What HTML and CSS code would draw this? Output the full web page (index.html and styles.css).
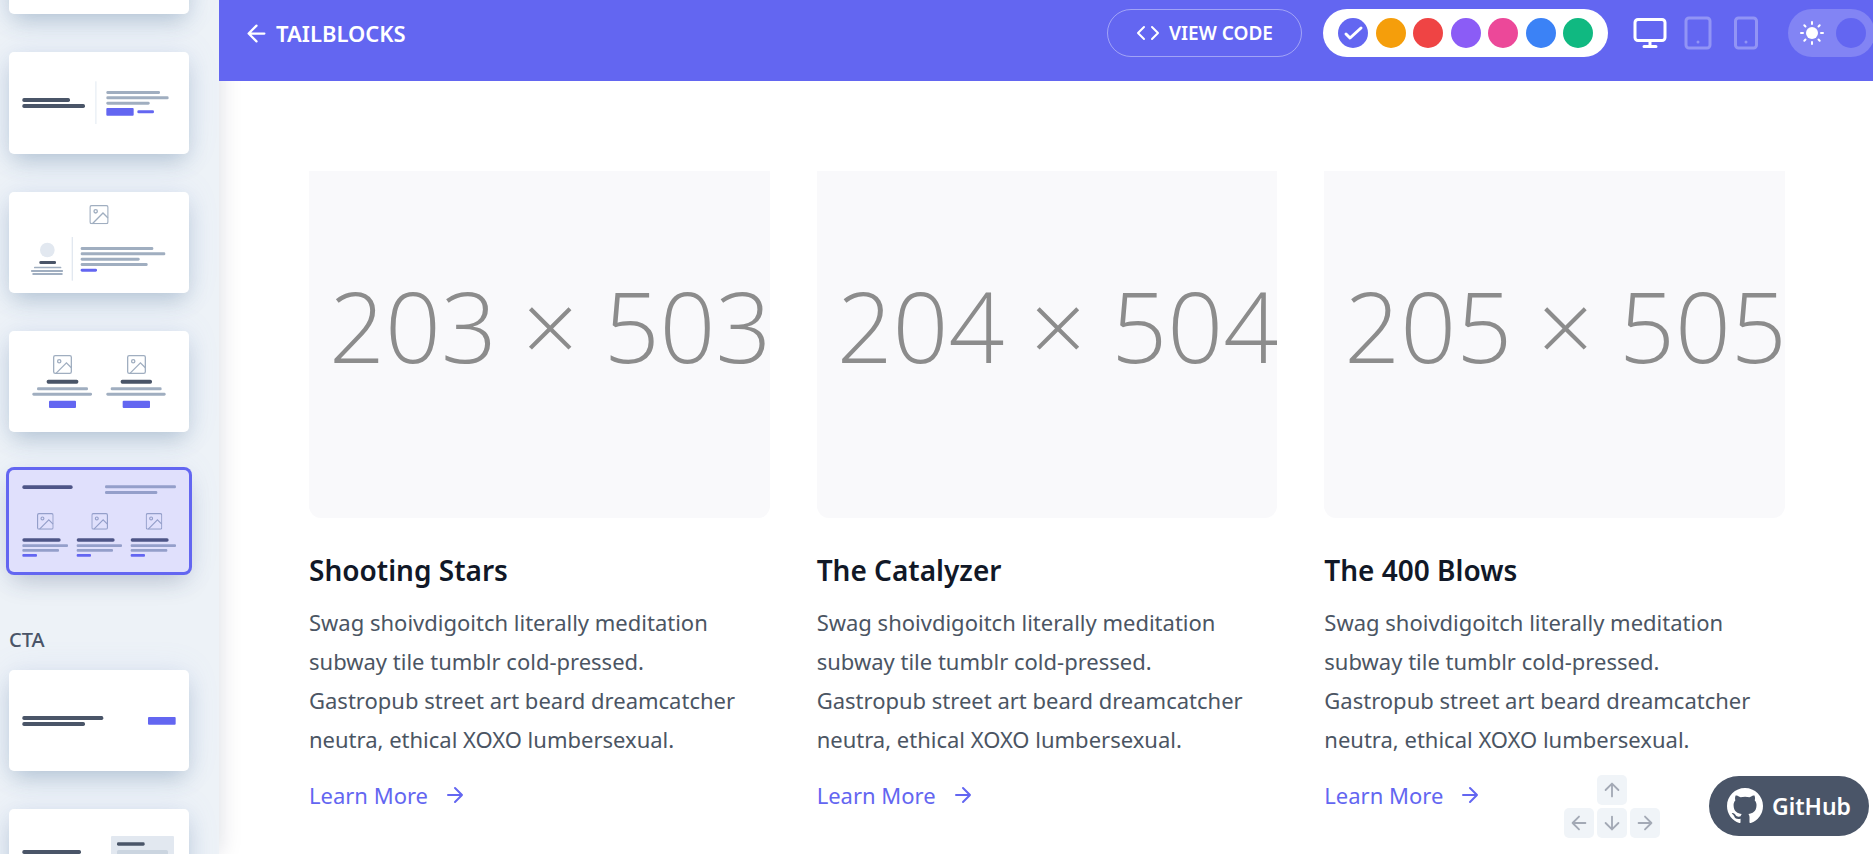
FILE: index.html
```
<!DOCTYPE html>
<html lang="en">
<head>
<meta charset="utf-8">
<meta name="viewport" content="width=device-width, initial-scale=1">
<title>Tailblocks</title>
<link rel="stylesheet" href="styles.css">
</head>
<body>
<svg width="0" height="0" class="sprite" aria-hidden="true">
  <symbol id="picture" viewBox="0 0 58 58">
    <rect x="2" y="2" width="54" height="54" rx="5"/>
    <circle cx="19" cy="19" r="5"/>
    <path d="M9 56 41 24 56 39"/>
  </symbol>
  <symbol id="arrow" viewBox="0 0 24 24"><path d="M5 12h14M12 5l7 7-7 7"/></symbol>
</svg>
<div class="app">
  <aside class="sidebar">
    <div class="block-list">
      <button class="block" aria-label="Content block 1"><svg viewBox="0 0 540 304"></svg></button>
      <button class="block" aria-label="Content block 2">
        <svg viewBox="0 0 540 304">
          <g class="dark"><rect x="40" y="138" width="143" height="12" rx="5"/><rect x="40" y="156" width="188" height="12" rx="5"/></g>
          <rect class="pale" x="258" y="88" width="5" height="128"/>
          <g class="grey"><rect x="292" y="117" width="161" height="9" rx="4"/><rect x="292" y="133" width="187" height="9" rx="4"/><rect x="292" y="149" width="130" height="9" rx="4"/></g>
          <g class="brand"><rect x="292" y="168" width="82" height="23" rx="3"/><rect x="385" y="175" width="50" height="9" rx="4"/></g>
        </svg>
      </button>
      <button class="block" aria-label="Content block 3">
        <svg viewBox="0 0 540 304">
          <use class="line" href="#picture" x="241" y="39" width="58" height="58"/>
          <circle class="light" cx="115" cy="174" r="22"/>
          <rect class="dark" x="91" y="207" width="50" height="9" rx="4"/>
          <g class="grey"><rect x="75" y="224" width="82" height="5" rx="2"/><rect x="66" y="234" width="96" height="6" rx="2"/><rect x="70" y="243" width="91" height="6" rx="2"/></g>
          <rect class="light" x="188" y="135" width="4" height="131"/>
          <g class="grey"><rect x="215" y="165" width="218" height="9" rx="4"/><rect x="215" y="181" width="254" height="9" rx="4"/><rect x="215" y="197" width="177" height="9" rx="4"/><rect x="215" y="213" width="201" height="9" rx="4"/></g>
          <rect class="brand" x="215" y="230" width="49" height="9" rx="4"/>
        </svg>
      </button>
      <button class="block" aria-label="Content block 4">
        <svg viewBox="0 0 540 304">
          <use class="line" href="#picture" x="132" y="72" width="57" height="57"/>
          <use class="line" href="#picture" x="354" y="72" width="57" height="57"/>
          <g class="dark"><rect x="113" y="146" width="95" height="12" rx="5"/><rect x="335" y="146" width="94" height="12" rx="5"/></g>
          <g class="grey"><rect x="84" y="169" width="153" height="9" rx="4"/><rect x="305" y="169" width="153" height="9" rx="4"/><rect x="70" y="185" width="179" height="9" rx="4"/><rect x="292" y="185" width="178" height="9" rx="4"/></g>
          <g class="brand"><rect x="120" y="209" width="81" height="22" rx="3"/><rect x="341" y="209" width="82" height="22" rx="3"/></g>
        </svg>
      </button>
      <button class="block selected" aria-label="Content block 5" aria-pressed="true">
        <svg viewBox="0 0 540 304">
          <rect class="dark" x="40" y="46" width="151" height="11" rx="5"/>
          <g class="grey"><rect x="288" y="46" width="213" height="9" rx="4"/><rect x="288" y="63" width="157" height="9" rx="4"/></g>
          <use class="line" href="#picture" x="84" y="129" width="50" height="50"/>
          <use class="line" href="#picture" x="247" y="129" width="50" height="50"/>
          <use class="line" href="#picture" x="410" y="129" width="50" height="50"/>
          <g class="dark"><rect x="40" y="205" width="115" height="10" rx="5"/><rect x="203" y="205" width="114" height="10" rx="5"/><rect x="365" y="205" width="114" height="10" rx="5"/></g>
          <g class="grey"><rect x="40" y="223" width="137" height="8" rx="3"/><rect x="203" y="223" width="136" height="8" rx="3"/><rect x="365" y="223" width="136" height="8" rx="3"/><rect x="40" y="237" width="110" height="8" rx="3"/><rect x="203" y="237" width="109" height="8" rx="3"/><rect x="365" y="237" width="110" height="8" rx="3"/></g>
          <g class="brand"><rect x="40" y="252" width="44" height="8" rx="3"/><rect x="203" y="252" width="43" height="8" rx="3"/><rect x="365" y="252" width="43" height="8" rx="3"/></g>
        </svg>
      </button>
    </div>
    <h2 class="group-title">CTA</h2>
    <div class="block-list">
      <button class="block" aria-label="CTA block 1">
        <svg viewBox="0 0 540 304">
          <g class="dark"><rect x="40" y="138" width="243" height="12" rx="5"/><rect x="40" y="156" width="188" height="12" rx="5"/></g>
          <rect class="brand" x="417" y="141" width="83" height="23" rx="3"/>
        </svg>
      </button>
      <button class="block" aria-label="CTA block 2">
        <svg viewBox="0 0 540 304">
          <rect class="light" x="306" y="81" width="189" height="150" rx="3"/>
          <rect class="field" x="324" y="123" width="153" height="24" rx="5"/>
          <g class="dark"><rect x="324" y="100" width="83" height="10" rx="4"/><rect x="40" y="123" width="176" height="12" rx="5"/><rect x="40" y="141" width="130" height="12" rx="5"/></g>
        </svg>
      </button>
    </div>
  </aside>

  <div class="page">
    <header class="toolbar">
      <button class="opener"><svg class="icon flip" viewBox="0 0 24 24"><use href="#arrow"/></svg>TAILBLOCKS</button>
      <button class="view-code"><svg class="icon" viewBox="0 0 24 24"><path d="M16 18l6-6-6-6M8 6l-6 6 6 6"/></svg>VIEW CODE</button>
      <div class="palette">
        <button class="dot indigo" aria-label="Indigo"><svg class="icon" viewBox="0 0 24 24"><path d="M20 7 9 17l-4-4"/></svg></button>
        <button class="dot yellow" aria-label="Yellow"></button>
        <button class="dot red" aria-label="Red"></button>
        <button class="dot purple" aria-label="Purple"></button>
        <button class="dot pink" aria-label="Pink"></button>
        <button class="dot blue" aria-label="Blue"></button>
        <button class="dot green" aria-label="Green"></button>
      </div>
      <div class="devices">
        <button class="device current" aria-label="Desktop"><svg class="icon" viewBox="0 0 24 24"><rect x="2" y="3" width="20" height="14" rx="2"/><path d="M8 21h8M12 17v4"/></svg></button>
        <button class="device" aria-label="Tablet"><svg class="icon" viewBox="0 0 24 24"><rect x="4" y="2" width="16" height="20" rx="2"/><path d="M12 18h.01"/></svg></button>
        <button class="device" aria-label="Phone"><svg class="icon" viewBox="0 0 24 24"><rect x="5" y="2" width="14" height="20" rx="2"/><path d="M12 18h.01"/></svg></button>
      </div>
      <button class="mode" aria-label="Toggle dark mode">
        <svg class="icon" viewBox="0 0 24 24"><circle class="sun" cx="12" cy="12" r="6"/><path d="M12 1v2M12 21v2M1 12h2M21 12h2M4.300 4.300l1.200 1.200M18.500 18.500l1.200 1.200M4.300 19.700l1.200-1.200M18.500 5.500l1.200-1.200"/></svg>
        <span class="knob"></span>
      </button>
    </header>

    <main class="preview">
      <article class="card">
        <div class="thumb" role="img">203 × 503</div>
        <h2 class="title">Shooting Stars</h2>
        <p class="copy">Swag shoivdigoitch literally meditation subway tile tumblr cold-pressed. Gastropub street art beard dreamcatcher neutra, ethical XOXO lumbersexual.</p>
        <a class="more" href="#">Learn More<svg class="icon" viewBox="0 0 24 24"><use href="#arrow"/></svg></a>
      </article>
      <article class="card">
        <div class="thumb" role="img">204 × 504</div>
        <h2 class="title">The Catalyzer</h2>
        <p class="copy">Swag shoivdigoitch literally meditation subway tile tumblr cold-pressed. Gastropub street art beard dreamcatcher neutra, ethical XOXO lumbersexual.</p>
        <a class="more" href="#">Learn More<svg class="icon" viewBox="0 0 24 24"><use href="#arrow"/></svg></a>
      </article>
      <article class="card">
        <div class="thumb" role="img">205 × 505</div>
        <h2 class="title">The 400 Blows</h2>
        <p class="copy">Swag shoivdigoitch literally meditation subway tile tumblr cold-pressed. Gastropub street art beard dreamcatcher neutra, ethical XOXO lumbersexual.</p>
        <a class="more" href="#">Learn More<svg class="icon" viewBox="0 0 24 24"><use href="#arrow"/></svg></a>
      </article>
    </main>
  </div>
</div>

<div class="floating">
  <div class="keys">
    <span class="key up"><svg class="icon" viewBox="0 0 24 24"><path d="M12 19V5M5 12l7-7 7 7"/></svg></span>
    <span class="key"><svg class="icon flip" viewBox="0 0 24 24"><use href="#arrow"/></svg></span>
    <span class="key"><svg class="icon" viewBox="0 0 24 24"><path d="M12 5v14M5 12l7 7 7-7"/></svg></span>
    <span class="key"><svg class="icon" viewBox="0 0 24 24"><use href="#arrow"/></svg></span>
  </div>
  <a class="github" href="#"><svg viewBox="0 0 16 16"><path d="M8 0C3.580 0 0 3.580 0 8c0 3.540 2.290 6.530 5.470 7.590.4.070.55-.17.55-.38 0-.19-.01-.82-.01-1.490-2.010.37-2.530-.49-2.690-.94-.09-.23-.48-.94-.82-1.130-.28-.15-.68-.52-.01-.53.63-.01 1.080.58 1.230.82.72 1.210 1.870.87 2.330.66.07-.52.28-.87.51-1.070-1.780-.2-3.640-.89-3.640-3.950 0-.87.31-1.590.82-2.150-.08-.2-.36-1.020.08-2.120 0 0 .67-.21 2.200.82.64-.18 1.320-.27 2-.27.68 0 1.360.09 2 .27 1.530-1.040 2.200-.82 2.200-.82.44 1.100.16 1.920.08 2.120.51.56.82 1.270.82 2.150 0 3.070-1.870 3.750-3.650 3.950.29.25.54.73.54 1.480 0 1.070-.01 1.930-.01 2.200 0 .21.15.46.55.38A8.010 8.010 0 0 0 16 8c0-4.420-3.580-8-8-8z"/></svg>GitHub</a>
</div>
</body>
</html>
```
FILE: styles.css
```
* { box-sizing: border-box; margin: 0; padding: 0; }
body { font-family: "Noto Sans", "Open Sans", sans-serif; background: #fff; overflow: hidden; }
button { font: inherit; border: 0; background: none; color: inherit; cursor: pointer; }
a { text-decoration: none; color: inherit; }
.sprite { position: absolute; }
.icon { fill: none; stroke: currentColor; stroke-width: 2; stroke-linecap: round; stroke-linejoin: round; display: block; flex: none; }
.flip { transform: scaleX(-1); }

.app { display: flex; height: 100vh; overflow: hidden; }

.sidebar { flex: none; width: 219px; padding: 0 30px 0 9px; background: #edf2f7; overflow: hidden; box-shadow: 0 0 22px rgba(0, 20, 60, .15); }
.block-list { display: flex; flex-direction: column; gap: 38px; }
.block-list:first-child { margin-top: -87px; }
.block { display: block; background: #fff; border-radius: 5px; box-shadow: 0 0 32px rgba(120, 150, 230, .12), 0 10px 22px -4px rgba(40, 85, 120, .28); }
.block svg { display: block; width: 100%; }
.selected { background: #e0e0fc; box-shadow: 0 0 0 3px #6366f1, 0 0 32px rgba(120, 150, 230, .12), 0 12px 24px -4px rgba(40, 60, 90, .25); }
.dark { fill: #4a5568; }
.grey { fill: #a0aec0; }
.light { fill: #e2e8f0; }
.pale { fill: #edf2f7; }
.field { fill: #cbd5e0; }
.brand { fill: #6366f1; }
.line { fill: none; stroke: #a0aec0; stroke-width: 4; }
.selected .dark { fill: #4e5587; }
.selected .grey { fill: #949fca; }
.selected .line { stroke: #949fca; }
.group-title { margin: 53px 0 15px; font-size: 20px; line-height: 30px; font-weight: 500; color: #4a5568; }

.page { flex: 1; min-width: 0; display: flex; flex-direction: column; }
.toolbar { position: relative; display: flex; align-items: center; flex: none; padding: 9px 0 24px 24px; background: #6366f1; color: #fff; }
.opener { display: flex; align-items: center; gap: 6px; font-size: 22px; line-height: 30px; font-weight: 600; margin-right: auto; }
.opener .icon { width: 27px; height: 27px; }
.view-code { display: flex; align-items: center; justify-content: center; gap: 9px; width: 195px; height: 48px; border: 1px solid rgba(255, 255, 255, .4); border-radius: 24px; font-size: 19px; font-weight: 600; margin-right: 21px; }
.view-code .icon { width: 24px; height: 24px; }
.palette { display: flex; align-items: center; justify-content: space-between; width: 285px; height: 48px; padding: 0 15px; border-radius: 24px; background: #fff; margin-right: 24px; }
.dot { display: flex; align-items: center; justify-content: center; width: 30px; height: 30px; border-radius: 50%; }
.dot .icon { width: 24px; height: 24px; stroke-width: 3; }
.indigo { background: #6366f1; }
.yellow { background: #f59e0b; }
.red { background: #ef4444; }
.purple { background: #8b5cf6; }
.pink { background: #ec4899; }
.blue { background: #3b82f6; }
.green { background: #10b981; }
.devices { display: flex; gap: 12px; margin-right: 24px; }
.device { opacity: .3; }
.current { opacity: 1; }
.device .icon { width: 36px; height: 36px; }
.mode { display: flex; align-items: center; justify-content: space-between; flex: none; width: 87px; height: 48px; padding: 0 9px 0 12px; border-radius: 24px; background: #8284f4; margin-right: -2px; }
.mode .icon { width: 24px; height: 24px; }
.sun { fill: #fff; stroke: none; }
.knob { width: 30px; height: 30px; border-radius: 50%; background: #6366f1; }

.preview { display: grid; grid-template-columns: repeat(3, minmax(0, 1fr)); gap: 47px; padding: 90px 88px 0 90px; }
.thumb { height: 347px; padding: 88px 0 0 20px; overflow: hidden; white-space: nowrap; border-radius: 0 0 12px 12px; background: #f9f9fb; color: #8c8c8c; font-family: "Open Sans", "Noto Sans", sans-serif; font-weight: 300; font-size: 98px; line-height: 132px; }
.title { margin-top: 30px; font-size: 28px; line-height: 45px; font-weight: 600; color: #111827; }
.copy { margin-top: 10px; padding-right: 16px; font-size: 22px; line-height: 39px; color: #4b5563; }
.more { display: inline-flex; align-items: center; gap: 15px; margin-top: 18px; font-size: 22px; line-height: 36px; color: #6366f1; }
.more .icon { width: 24px; height: 24px; }

.floating { position: fixed; right: 4px; bottom: 16px; display: flex; align-items: flex-end; gap: 49px; }
.keys { display: grid; grid-template-columns: repeat(3, 30px); gap: 3px; }
.key { display: flex; align-items: center; justify-content: center; height: 30px; border-radius: 5px; background: #f0f4f8; color: #a3a9b5; }
.up { grid-column: 2; }
.key:nth-child(2) { grid-column: 1; }
.key .icon { width: 22px; height: 22px; }
.github { display: flex; align-items: center; gap: 9px; height: 60px; padding: 0 18px; margin-bottom: 2px; border-radius: 30px; background: #4a5568; color: #fff; font-size: 23px; font-weight: 600; }
.github svg { width: 36px; height: 36px; fill: #fff; }
```
